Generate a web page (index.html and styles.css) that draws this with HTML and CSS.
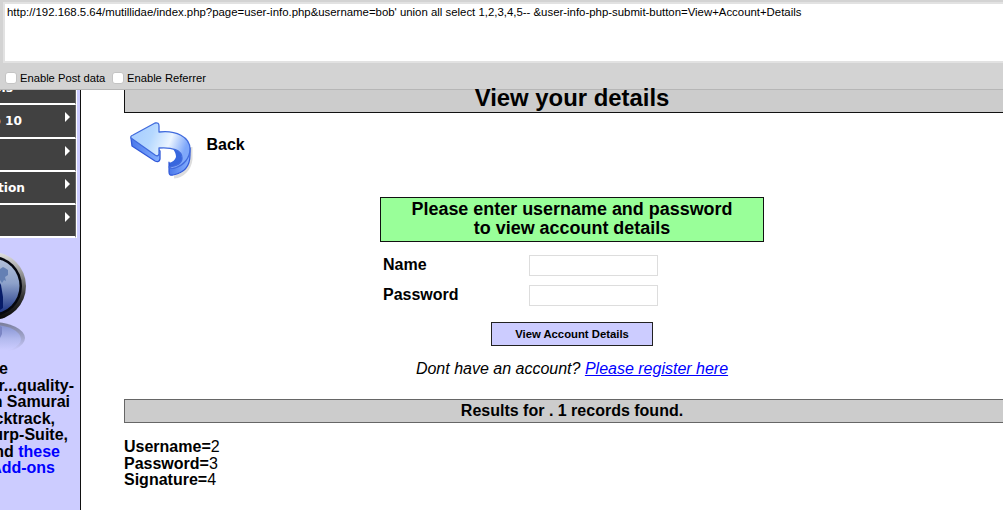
FILE: index.html
```
<!DOCTYPE html>
<html lang="en">
<head>
    <meta charset="UTF-8">
    <title>View your details</title>
    <link rel="stylesheet" href="styles.css">
</head>
<body>
    <div class="hackbar">
        <div class="url-box"><span class="url">http://192.168.5.64/mutillidae/index.php?page=user-info.php&amp;username=bob' union all select 1,2,3,4,5-- &amp;user-info-php-submit-button=View+Account+Details</span></div>
        <div class="options">
            <span class="check"></span><span class="post-label">Enable Post data</span>
            <span class="check"></span><span class="ref-label">Enable Referrer</span>
        </div>
    </div>

    <div class="page">
        <div class="sidebar">
            <div class="menu">
                <div class="menu-item first"><span class="menu-text w13">ols</span></div>
                <div class="menu-item"><span class="menu-text w22">p 10</span><span class="arrow"></span></div>
                <div class="menu-item"><span class="arrow"></span></div>
                <div class="menu-item"><span class="menu-text w25">tion</span><span class="arrow"></span></div>
                <div class="menu-item"><span class="arrow"></span></div>
            </div>
            <svg class="badge" width="28" height="106" viewBox="0 0 28 106">
                <defs>
                    <linearGradient id="rim" x1="0" y1="0" x2="0" y2="1">
                        <stop offset="0" stop-color="#e4e4e4"/>
                        <stop offset="0.3" stop-color="#999"/>
                        <stop offset="0.65" stop-color="#333"/>
                        <stop offset="1" stop-color="#080808"/>
                    </linearGradient>
                    <linearGradient id="globe" x1="0" y1="0" x2="0" y2="1">
                        <stop offset="0" stop-color="#b4c2da"/>
                        <stop offset="0.45" stop-color="#8da1ca"/>
                        <stop offset="1" stop-color="#1a3284"/>
                    </linearGradient>
                    <linearGradient id="mirror" x1="0" y1="0" x2="0" y2="1">
                        <stop offset="0" stop-color="#777b98"/>
                        <stop offset="0.5" stop-color="#a4a8d0"/>
                        <stop offset="0.9" stop-color="#ccf"/>
                    </linearGradient>
                    <linearGradient id="mirrorin" x1="0" y1="0" x2="0" y2="1">
                        <stop offset="0" stop-color="#8492d2"/>
                        <stop offset="0.5" stop-color="#b3baee"/>
                        <stop offset="0.9" stop-color="#ccf"/>
                    </linearGradient>
                </defs>
                <circle cx="-8" cy="34" r="34" fill="url(#rim)"/>
                <circle cx="-8" cy="34" r="30" fill="#05070f"/>
                <circle cx="-8" cy="34" r="27.5" fill="url(#globe)"/>
                <path d="M0 17l3-2 2 1 3 2v5l-3 2 1 4-2-1-2 3-2-3z" fill="#6480b4"/>
                <path d="M0 31l1 2 2 12v11l-3 2z" fill="#071c68"/>
                <ellipse cx="-8" cy="86" rx="33" ry="16" fill="url(#mirror)"/>
                <ellipse cx="-8" cy="87" rx="29" ry="14" fill="url(#mirrorin)"/>
                <path d="M0 74l2 1v7l-2 4z" fill="#7b85c4"/>
            </svg>
            <div class="credits">
                <div class="r8">e</div>
                <div class="r74">r...quality-</div>
                <div class="r70">n Samurai</div>
                <div class="r55">cktrack,</div>
                <div class="r68">urp-Suite,</div>
                <div class="r60">nd <a href="#">these</a></div>
                <div class="r55"><a href="#">Add-ons</a></div>
            </div>
        </div>

        <div class="main">
            <div class="title"><span>View your details</span></div>
            <div class="back">
                <svg class="back-icon" width="66" height="60" viewBox="0 0 66 60">
                    <defs>
                        <linearGradient id="face" x1="0" y1="0" x2="1" y2="0.3">
                            <stop offset="0" stop-color="#a5cbff"/>
                            <stop offset="0.4" stop-color="#b5d8ff"/>
                            <stop offset="0.72" stop-color="#ecf5ff"/>
                            <stop offset="1" stop-color="#7fa8fa"/>
                        </linearGradient>
                        <linearGradient id="side" x1="0" y1="0" x2="1" y2="0">
                            <stop offset="0" stop-color="#4a78ea"/>
                            <stop offset="1" stop-color="#86b0ff"/>
                        </linearGradient>
                    </defs>
                    <path d="M45 57c9-1 16-8 17-18V27" fill="none" stroke="#bbb" stroke-width="3" opacity="0.5"/>
                    <!-- dark edge of the arrow -->
                    <path d="M2 18l1 8 23 15q4 2 5-2v-8l-3-3z" fill="url(#side)" stroke="#3159d8" stroke-width="1.3" stroke-linejoin="round"/>
                    <!-- inside of the curl -->
                    <path d="M44 29c5 1 9 4 9 9 0 6-6 9-13 9v-4c4-1 6-3 7-6 0-3-1-5-3-8z" fill="#3767de"/>
                    <path d="M40 42l1 5c7-1 12-4 12-9 1 1 0 2 0 2 5-3 8-8 8-12v7c0 11-6 18-17 20q-4 1-4-3z" fill="url(#side)" stroke="#3159d8" stroke-width="1.2" stroke-linejoin="round"/>
                    <path d="M2 18Q1 16 4 15L26 3q4-1 4 3v6c17-2 31 5 31 17 0 9-6 16-15 19q-5 1-6-1c8-1 13-4 13-9 0-8-10-11-23-10v6q-1 3-4 1z" fill="url(#face)" stroke="#416bdd" stroke-width="1.3" stroke-linejoin="round"/>
                </svg>
                <span class="back-label">Back</span>
            </div>

            <div class="form-header">
                <span class="line1">Please enter username and password</span><br>
                <span class="line2">to view account details</span>
            </div>
            <div class="form">
                <div class="row"><span class="label name">Name</span><input type="text"></div>
                <div class="row"><span class="label pass">Password</span><input type="text"></div>
            </div>
            <button class="submit">View Account Details</button>
            <div class="register"><span>Dont have an account? <a href="#">Please register here</a></span></div>

            <div class="results"><span>Results for . 1 records found.</span></div>
            <div class="record">
                <div><b>Username=</b>2</div>
                <div><b>Password=</b>3</div>
                <div><b>Signature=</b>4</div>
            </div>
        </div>
    </div>
</body>
</html>
```
FILE: styles.css
```
* {
    box-sizing: border-box;
}

body {
    margin: 0;
    width: 1003px;
    height: 510px;
    overflow: hidden;
    background: #fff;
    color: #000;
    font-family: "Liberation Sans", Arial, sans-serif;
    font-size: 16px;
}

/* url toolbar */
.hackbar {
    height: 90px;
    padding: 2px 0 0 3px;
    background: #d3d3d3;
    border-bottom: 1px solid #b6b6b6;
}

.url-box {
    height: 61px;
    padding: 2px 0 0 2px;
    background: #fff;
    border: 2px solid #e2e2e2;
    border-right: none;
    font-size: 11.4px;
    line-height: 13px;
    white-space: nowrap;
}

.options {
    display: flex;
    align-items: center;
    height: 26px;
    padding: 4px 0 0 2px;
    font-size: 11.2px;
}

.check {
    width: 12px;
    height: 12px;
    margin-right: 3px;
    background: #fff;
    border: 1px solid #c4c4c4;
    border-radius: 3px;
}

.post-label {
    width: 92px;
    white-space: nowrap;
}

.page {
    display: flex;
    height: 420px;
}

/* left menu */
.sidebar {
    flex: none;
    width: 81px;
    overflow: hidden;
    background: #ccf;
    border-right: 1px solid #111;
}

.menu {
    width: 77px;
    height: 148px;
    border-right: 1px solid #fff;
}

.menu-item {
    display: flex;
    justify-content: space-between;
    height: 33.3px;
    padding: 7px 5px 0 0;
    background: #414141;
    border-bottom: 2px solid #fff;
    border-right: 1px solid #666;
    color: #fff;
    font: bold 12.2px/19px "DejaVu Sans", Verdana, sans-serif;
}

.menu-item.first {
    height: 15.3px;
    padding-top: 0;
}

.first .menu-text {
    margin-top: -11px;
}

.menu-text {
    display: flex;
    justify-content: flex-end;
    white-space: pre;
}

.w13 { width: 13px; }
.w22 { width: 22px; }
.w25 { width: 25px; }

.arrow {
    width: 0;
    height: 0;
    margin: 0 0 0 auto;
    border: 5px solid transparent;
    border-left-color: #fff;
    border-right: none;
}

.badge {
    display: block;
    margin-top: 14px;
}

.credits {
    margin-top: 3px;
    font-weight: bold;
    line-height: 16.5px;
}

.credits div {
    display: flex;
    justify-content: flex-end;
    white-space: pre;
}

.credits a {
    color: #00f;
    text-decoration: none;
}

.r8 { width: 8px; }
.r55 { width: 55px; }
.r60 { width: 60px; }
.r68 { width: 68px; }
.r70 { width: 70px; }
.r74 { width: 74px; }

/* content */
.main {
    flex: none;
    width: 896px;
    margin-left: 43px;
}

.title {
    height: 23px;
    background: #ccc;
    border: 1px solid #111;
    border-top: none;
    font-size: 23.9px;
    font-weight: bold;
    line-height: 16px;
    text-align: center;
}

.back {
    display: flex;
    height: 84px;
    padding: 7px 0 0 5px;
    font-weight: bold;
}

.back-label {
    margin: 16px 0 0 11.5px;
}

.form-header {
    width: 384px;
    height: 45px;
    margin: 0 auto;
    padding-top: 2px;
    background: #9f9;
    border: 1px solid #111;
    font-size: 17.95px;
    font-weight: bold;
    line-height: 18.5px;
    text-align: center;
}

.form {
    width: 384px;
    margin: 13px auto 0;
    padding-left: 3px;
}

.row {
    display: flex;
    height: 29.5px;
}

.label {
    width: 146px;
    font-weight: bold;
    line-height: 19.6px;
}

.row input {
    width: 129px;
    height: 21px;
    padding: 0;
    background: #fff;
    border: 1px solid #ddd;
    outline: none;
}

.submit {
    display: block;
    width: 162px;
    height: 24px;
    margin: 8px auto 0;
    padding: 0;
    background: #ccf;
    border: 1px solid #222;
    border-radius: 0;
    color: #000;
    font: bold 11.3px "Liberation Sans", Arial, sans-serif;
}

.register {
    margin-top: 14px;
    font-style: italic;
    line-height: 18px;
    text-align: center;
}

.register a {
    color: #00f;
}

.results {
    height: 24px;
    margin-top: 21px;
    background: #ccc;
    border: 1px solid #666;
    font-weight: bold;
    line-height: 21px;
    text-align: center;
}

.record {
    margin-top: 16px;
    line-height: 16.5px;
}
```
